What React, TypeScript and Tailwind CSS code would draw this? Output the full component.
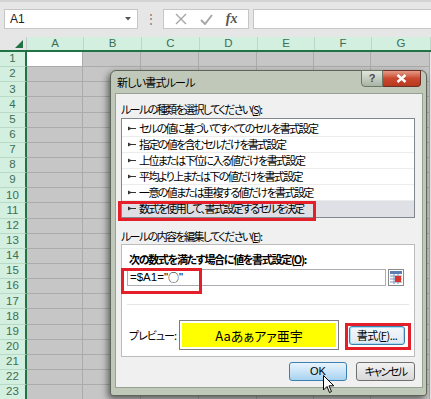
import React from 'react';

const cols = ['A', 'B', 'C', 'D', 'E', 'F', 'G'];
const colW = [57, 58, 58, 58, 57, 57, 59];
const rows = Array.from({ length: 23 }, (_, i) => i + 1);

const rules = [
  'セルの値に基づいてすべてのセルを書式設定',
  '指定の値を含むセルだけを書式設定',
  '上位または下位に入る値だけを書式設定',
  '平均より上または下の値だけを書式設定',
  '一意の値または重複する値だけを書式設定',
  '数式を使用して、書式設定するセルを決定',
];

const jp = "font-['Noto_Sans_CJK_JP',sans-serif] [font-feature-settings:'palt']";

function Arrow() {
  return (
    <svg width="8" height="5" viewBox="0 0 8 5" className="shrink-0">
      <polygon points="0,0.5 0,4.5 4,2.5" fill="#333" />
      <rect x="3" y="2" width="5" height="1" fill="#333" />
    </svg>
  );
}

function TopBar() {
  return (
    <div className="h-[37px] bg-[#e6e6e6] border-t-2 border-[#d4d4d4] flex items-start pt-[7px] pl-[4px] font-['Liberation_Sans',sans-serif]">
      <div className="w-[134px] h-[20px] bg-white border border-[#c6c6c6] flex items-center pl-[5px] pr-[6px] text-[12px] text-[#222]">
        <span className="flex-1">A1</span>
        <svg width="6" height="4" viewBox="0 0 6 4"><polygon points="0,0 6,0 3,3.5" fill="#555" /></svg>
      </div>
      <div className="w-[25px] h-[20px] flex items-center justify-center text-[#777] text-[12px]">⋮</div>
      <div className="w-[86px] h-[20px] bg-white border border-[#c6c6c6] flex items-center justify-around px-[4px]">
        <svg width="12" height="12" viewBox="0 0 12 12"><path d="M1 1 L11 11 M11 1 L1 11" stroke="#a6a6a6" strokeWidth="1.4" /></svg>
        <svg width="13" height="11" viewBox="0 0 13 11"><path d="M1 6 L5 10 L12 1" stroke="#a6a6a6" strokeWidth="2" fill="none" /></svg>
        <span className="font-['Liberation_Serif',serif] italic text-[14px] text-[#555] font-bold leading-none">fx</span>
      </div>
      <div className="ml-[4px] flex-1 h-[20px] bg-white border border-[#c6c6c6] border-r-0" />
    </div>
  );
}

function Sheet() {
  return (
    <div className="font-['Liberation_Sans',sans-serif] text-[11.5px] text-[#3d6e52]">
      <div className="flex h-[15px] border-b-2 border-[#217346]">
        <div className="w-[27px] relative bg-[#e6e6e6] border-r border-[#c8c8c8]">
          <svg width="8" height="8" viewBox="0 0 8 8" className="absolute right-[3px] bottom-[2px]"><polygon points="8,0 8,8 0,8" fill="#217346" /></svg>
        </div>
        {cols.map((c, i) => (
          <div key={c} style={{ width: colW[i] }} className="bg-[#d3efe0] border-r border-[#b7d9c5] flex items-center justify-center leading-none">
            {c}
          </div>
        ))}
      </div>
      {rows.map((r) => (
        <div key={r} className="flex h-[15.15px]">
          <div className="w-[27px] bg-[#d3efe0] border-r-2 border-[#217346] border-b border-b-[#b7d9c5] flex items-center justify-center leading-none">
            {r}
          </div>
          {cols.map((c, i) => (
            <div
              key={c}
              style={{ width: i === 0 ? colW[i] - 1 : colW[i] }}
              className={(r === 1 && i === 0 ? 'bg-white' : 'bg-[#c6c6c6]') + ' border-r border-b border-[#ababab]'}
            />
          ))}
        </div>
      ))}
    </div>
  );
}

function Dialog() {
  return (
    <div className={`absolute left-[110px] top-[70px] w-[317px] h-[326px] bg-[#c0c9b9] border border-[#5d6659] rounded-t-[6px] rounded-b-[3px] shadow-[-2px_3px_7px_rgba(0,0,0,0.55)] pt-[22px] pl-[4px] pr-[3px] pb-[7px] ${jp}`}>
      <div className="absolute left-[6px] top-[4px] text-[11px] tracking-[-0.8px] text-black leading-[14px]">新しい書式ルール</div>
      <div className="absolute top-[-1px] right-[5px] flex h-[17px]">
        <div className="w-[22px] border border-[#6d7768] rounded-bl-[4px] bg-gradient-to-b from-[#e1e6dd] to-[#a9b3a3] flex items-center justify-center text-[11px] font-bold text-[#4a4a4a] font-['Liberation_Sans',sans-serif]">?</div>
        <div className="w-[38px] border border-l-0 border-[#6b2f25] rounded-br-[4px] bg-gradient-to-b from-[#e49a86] via-[#c9482e] to-[#b8381f] flex items-center justify-center">
          <svg width="11" height="9" viewBox="0 0 11 9"><path d="M1.5 1 L9.5 8 M9.5 1 L1.5 8" stroke="#fff" strokeWidth="2.4" /></svg>
        </div>
      </div>

      <div className="relative h-full bg-[#f0f0f0] border border-[#98a293] pl-[5px] pr-[7px] text-[11px] tracking-[-1.6px] text-black">
        <div className="mt-[8px] h-[14px] leading-[14px]">ルールの種類を選択してください(<span className="underline">S</span>):</div>
        <div className="mt-[2px] h-[100px] bg-white border border-[#828790] pt-[2px]">
          {rules.map((t, i) => (
            <div
              key={t}
              className={'h-[16px] flex items-center gap-[3px] pl-[6px] border-b ' + (i === 5 ? 'bg-[#dfdfe6] border-[#dfdfe6]' : 'border-[#ececec]')}
            >
              <Arrow />
              <span className="leading-none">{t}</span>
            </div>
          ))}
        </div>

        <div className="mt-[11px] h-[14px] leading-[14px]">ルールの内容を編集してください(<span className="underline">E</span>):</div>
        <div className="mt-[1px] h-[113px] bg-white border border-[#bcbcbc] px-[5px]">
          <div className="mt-[7px] ml-[2px] h-[14px] leading-[14px] font-bold tracking-[-1.3px]">次の数式を満たす場合に値を書式設定(<span className="underline">O</span>):</div>
          <div className="mt-[3px] flex items-center gap-[2px]">
            <div className="w-[259px] h-[17px] border border-[#abadb3] flex items-center pl-[2px] text-[11.5px] tracking-normal font-['Liberation_Sans','Noto_Sans_CJK_JP',sans-serif]">
              =$A1="<span className="font-['Noto_Sans_CJK_JP',sans-serif] text-[11px]">○</span>"
            </div>
            <svg width="16" height="17" viewBox="0 0 16 17">
              <rect x="0.5" y="0.5" width="15" height="16" fill="#fff" stroke="#8a8a8a" />
              <rect x="2" y="2" width="12" height="3" fill="#5b7fb0" />
              <path d="M2 7 H14 M2 10 H14 M2 13 H14 M6 5 V15 M10 5 V15" stroke="#7a95bd" strokeWidth="1" />
              <rect x="7" y="7" width="6" height="6" fill="#d8342a" />
            </svg>
          </div>
          <div className="mt-[18px] h-px bg-[#e6e6e6]" />
          <div className="mt-[15px] flex items-center">
            <div className="w-[50px] ml-[2px] leading-none whitespace-nowrap tracking-[-1px]">プレビュー:</div>
            <div className="w-[160px] h-[30px] border border-[#7d7d7d] p-[2px] bg-white">
              <div className="h-full bg-[#ffff00] flex items-center justify-center text-[13px] tracking-normal leading-none">Aaあぁアァ亜宇</div>
            </div>
            <div className="ml-[10px] w-[56px] h-[19px] border border-[#3c7fb1] rounded-[3px] bg-gradient-to-b from-[#f4f8fc] to-[#dfe8f1] flex items-center justify-center tracking-[-0.5px] shadow-[inset_0_0_0_1px_#a9dbf6]">
              書式(<span className="underline">F</span>)...
            </div>
          </div>
        </div>

        <div className="mt-[5px] flex justify-end gap-[9px]">
          <div className="w-[58px] h-[19px] border border-[#3c7fb1] rounded-[3px] bg-gradient-to-b from-[#e8f4fc] via-[#c9e4f8] to-[#a8d2f0] flex items-center justify-center tracking-normal font-['Liberation_Sans',sans-serif]">OK</div>
          <div className="w-[59px] h-[19px] border border-[#707070] rounded-[3px] bg-gradient-to-b from-[#f2f2f2] to-[#d8d8d8] flex items-center justify-center">キャンセル</div>
        </div>

        <div className="absolute left-[2px] top-[107px] w-[198px] h-[20px] border-[3px] border-[#e51f2a]" />
        <div className="absolute left-[5px] top-[174px] w-[81px] h-[26px] border-[3px] border-[#e51f2a]" />
        <div className="absolute left-[229px] top-[229px] w-[66px] h-[27px] border-[3px] border-[#e51f2a]" />

        <svg width="12" height="19" viewBox="0 0 12 19" className="absolute left-[207px] top-[281px]">
          <path d="M0.5 0.5 L0.5 15 L4 11.5 L6.5 17.5 L8.5 16.5 L6 10.8 L10.8 10.8 Z" fill="#fff" stroke="#000" strokeWidth="1" />
        </svg>
      </div>
    </div>
  );
}

export default function App() {
  return (
    <div className="relative w-[431px] h-[399px] overflow-hidden bg-[#e6e6e6]">
      <TopBar />
      <Sheet />
      <Dialog />
    </div>
  );
}
